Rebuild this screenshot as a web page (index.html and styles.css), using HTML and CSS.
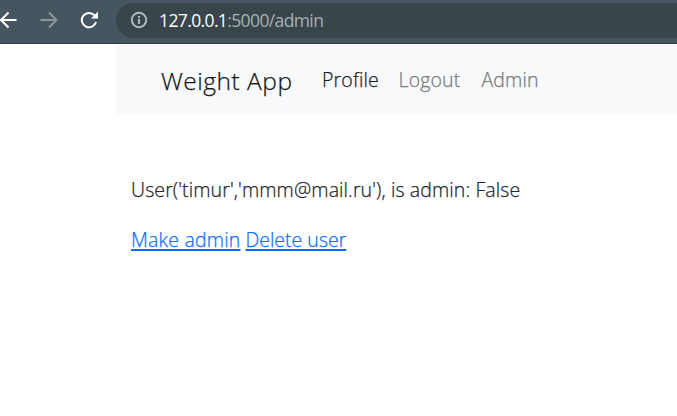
FILE: index.html
```html
<!DOCTYPE html>
<html lang="en">
<head>
<meta charset="utf-8">
<title>Weight App</title>
<link rel="stylesheet" href="styles.css">
</head>
<body>
<header class="toolbar">
  <div class="controls">
    <svg class="icon" viewBox="0 0 18 18"><path d="M16.500 9H2M8.500 1.500 1 9 8.500 16.500"/></svg>
    <svg class="icon muted" viewBox="0 0 18 18"><path d="M.5 9h15M9 1.500 16.500 9 9 16.500"/></svg>
    <svg class="icon" viewBox="0 0 18 18"><path d="M14.300 4.200A7.200 7.200 0 1 0 16 11"/><path class="solid" d="M18 .5v7h-7z"/></svg>
  </div>
  <div class="address">
    <svg class="info" viewBox="0 0 18 18"><circle cx="9" cy="9" r="7.200"/><path d="M9 8v5M9 5v2"/></svg>
    <span class="url"><span class="host">127.0.0.1</span><span class="path">:5000/admin</span></span>
  </div>
</header>
<div class="container">
  <nav class="navbar">
    <a class="brand">Weight App</a>
    <a class="link profile active">Profile</a>
    <a class="link logout">Logout</a>
    <a class="link admin">Admin</a>
  </nav>
  <main class="content">
    <p class="user">User('timur','mmm@mail.ru'), is admin: False</p>
    <div class="actions"><a class="make" href="#">Make admin</a><a class="delete" href="#">Delete user</a></div>
  </main>
</div>
</body>
</html>
```
FILE: styles.css
```css
* { box-sizing: border-box; }
body {
  margin: 0;
  height: 416px;
  overflow: hidden;
  background: #fff;
  color: #212529;
  font: 300 19.5px/30px "Open Sans", "Noto Sans", sans-serif;
  white-space: nowrap;
}
.toolbar {
  display: flex;
  height: 44px;
  padding-top: 3px;
  background: #455660;
  border-bottom: 1px solid #2d3e49;
}
.controls {
  display: flex;
  flex: 0 0 116px;
  gap: 22px;
  padding-top: 8px;
}
.icon {
  width: 18px;
  height: 18px;
  fill: none;
  stroke: #fff;
  stroke-width: 2;
}
.icon.muted { stroke: #8b969c; }
.icon .solid { fill: #fff; stroke: none; }
.address {
  display: flex;
  flex: 1;
  height: 35px;
  padding-left: 14px;
  border-radius: 18px 0 0 18px;
  background: #38454b;
}
.info {
  width: 18px;
  height: 18px;
  margin: 8px 11px 0 0;
  fill: none;
  stroke: #b3b8bb;
  stroke-width: 2;
}
.url {
  font-size: 17.5px;
  font-weight: 400;
  line-height: 35px;
  letter-spacing: -0.62px;
}
.host { color: #fff; }
.path { color: #a9b0b4; }
.container {
  margin-left: 116px;
  -webkit-text-stroke: 0.25px currentColor;
}
.navbar {
  display: flex;
  align-items: center;
  height: 70px;
  padding: 3px 0 0 45px;
  background: #f8f9fb;
}
.brand {
  width: 161px;
  color: #151719;
  font-size: 24.5px;
  letter-spacing: 0.5px;
}
.link {
  padding-bottom: 2px;
  color: #777a7d;
  letter-spacing: 0.15px;
}
.link.active { color: #191b1d; }
.profile { width: 76.5px; }
.logout { width: 83px; }
.content { padding: 61px 0 0 15px; }
.user { margin: 0 0 20px; letter-spacing: 0.11px; }
.actions { display: flex; gap: 5px; }
.actions a {
  color: #0d6efd;
  text-decoration: underline;
  text-decoration-thickness: 2px;
  text-underline-offset: 2px;
}
.make { letter-spacing: 0.2px; }
```
